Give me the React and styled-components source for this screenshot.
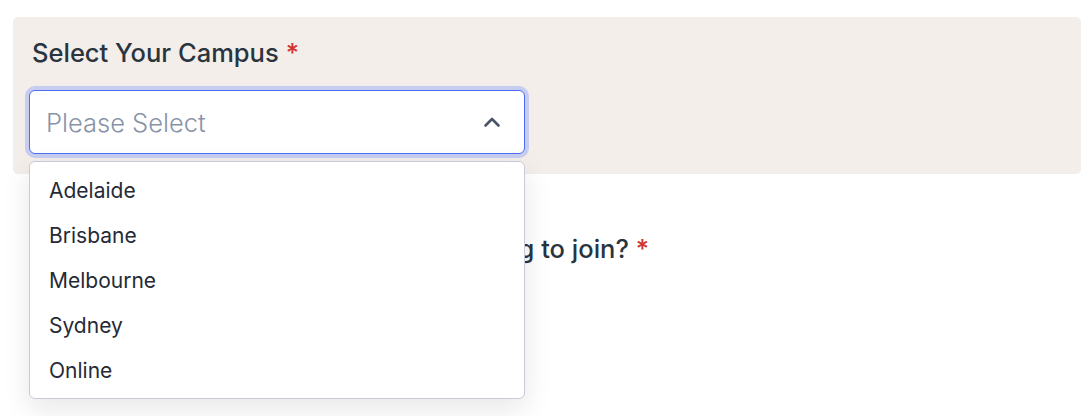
import React, { useState } from "react";
import styled, { createGlobalStyle } from "styled-components";

const GlobalStyle = createGlobalStyle`
  body {
    margin: 0;
    background: #ffffff;
    font-family: Inter, "Noto Sans", sans-serif;
  }
`;

const Page = styled.div`
  min-height: 416px;
  box-sizing: border-box;
  padding: 17px 10px 0 13px;
  display: flex;
  flex-direction: column;
  gap: 39px;
`;

const Question = styled.div`
  background-color: ${(p) => (p.$active ? "#f3eeea" : "transparent")};
  border-radius: 5px;
  padding: 20px 16px 20px;
  display: flex;
  flex-direction: column;
  gap: 21px;
`;

const Label = styled.div`
  font-size: 25.5px;
  font-weight: 500;
  color: #2a343f;
  padding-left: 3px;
  line-height: 32px;
`;

const Required = styled.span`
  color: #d0342c;
  margin-left: 7px;
`;

const SelectWrap = styled.div`
  position: relative;
  width: 496px;
`;

const SelectBox = styled.div`
  height: 62px;
  box-sizing: content-box;
  border: 1px solid #4b6ef5;
  border-radius: 6px;
  background: #ffffff;
  box-shadow: 0 0 0 4px #c6cdf0;
  display: flex;
  align-items: center;
  justify-content: space-between;
  padding: 0 23px 0 16px;
  cursor: pointer;
`;

const Placeholder = styled.span`
  font-size: 25.5px;
  font-weight: 300;
  color: #8893a8;
`;

const Menu = styled.ul`
  position: absolute;
  top: 71px;
  left: 0;
  width: 494px;
  margin: 0;
  padding: 6px 0 5px;
  list-style: none;
  background: #ffffff;
  border: 1px solid #c9cbda;
  border-radius: 6px;
  box-shadow: 0 10px 28px rgba(20, 24, 40, 0.1);
  z-index: 2;
`;

const Option = styled.li`
  height: 45px;
  display: flex;
  align-items: center;
  padding-left: 19px;
  font-size: 21px;
  color: #252a36;
  cursor: pointer;
`;

const Chevron = () => (
  <svg width="18" height="12" viewBox="0 0 18 12" fill="none">
    <path
      d="M2.5 9.5L9 3L15.5 9.5"
      stroke="#4a5468"
      strokeWidth="2.6"
      strokeLinecap="round"
      strokeLinejoin="round"
    />
  </svg>
);

const campuses = ["Adelaide", "Brisbane", "Melbourne", "Sydney", "Online"];

export default function App() {
  const [open] = useState(true);

  return (
    <>
      <GlobalStyle />
      <Page>
        <Question $active>
          <Label>
            Select Your Campus<Required>*</Required>
          </Label>
          <SelectWrap>
            <SelectBox>
              <Placeholder>Please Select</Placeholder>
              <Chevron />
            </SelectBox>
            {open && (
              <Menu>
                {campuses.map((c) => (
                  <Option key={c}>{c}</Option>
                ))}
              </Menu>
            )}
          </SelectWrap>
        </Question>
        <Question>
          <Label>
            Which course intake date are you looking to join?<Required>*</Required>
          </Label>
        </Question>
      </Page>
    </>
  );
}
